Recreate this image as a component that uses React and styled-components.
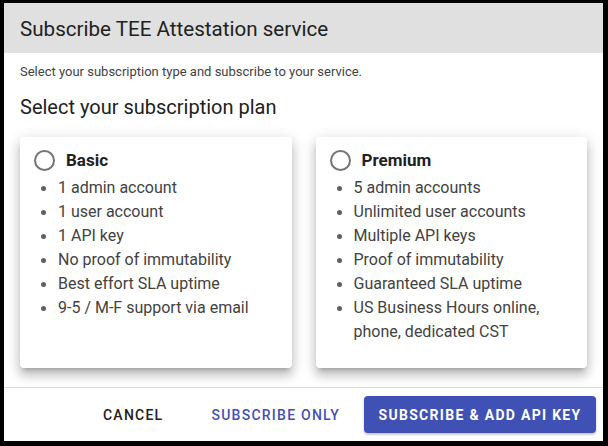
import React from 'react';
import styled, { createGlobalStyle } from 'styled-components';

const GlobalStyle = createGlobalStyle`
  html, body {
    margin: 0;
    padding: 0;
    background: #000;
  }
  body {
    font-family: Roboto, "Liberation Sans", sans-serif;
  }
`;

const Frame = styled.div`
  width: 608px;
  height: 446px;
  box-sizing: border-box;
  border-style: solid;
  border-color: #000;
  border-width: 3px 5px 5px 4px;
  background: #fff;
  display: flex;
  flex-direction: column;
`;

const Header = styled.div`
  height: 50px;
  background: #e0e0e0;
  display: flex;
  align-items: center;
  padding: 1px 16px 0;
  box-sizing: border-box;
  font-size: 20.6px;
  color: #212121;
`;

const Content = styled.div`
  flex: 1;
  padding: 10px 16px 0;
  display: flex;
  flex-direction: column;
`;

const Subtitle = styled.div`
  font-size: 13px;
  line-height: 18px;
  color: #424242;
`;

const PlanHeading = styled.div`
  margin-top: 12px;
  font-size: 20px;
  line-height: 28px;
  color: #212121;
`;

const Cards = styled.div`
  margin-top: 16px;
  display: grid;
  grid-template-columns: 1fr 1fr;
  gap: 24px;
`;

const Card = styled.div`
  background: #fff;
  border-radius: 4px;
  height: 231px;
  box-sizing: border-box;
  padding: 11px 14px 24px;
  box-shadow: 0 5px 5px -3px rgba(0, 0, 0, 0.2), 0 8px 10px 1px rgba(0, 0, 0, 0.14),
    0 3px 14px 2px rgba(0, 0, 0, 0.12);
`;

const CardTitle = styled.label`
  display: flex;
  align-items: center;
  gap: 11px;
  height: 24px;
  font-size: 17px;
  font-weight: 700;
  color: #212121;
`;

const Radio = styled.span`
  width: 17px;
  height: 17px;
  border-radius: 50%;
  border: 2px solid #757575;
  flex-shrink: 0;
`;

const Features = styled.ul`
  list-style: none;
  margin: 4px 0 0;
  padding: 0;
`;

const Feature = styled.li`
  position: relative;
  padding-left: 24px;
  font-size: 16px;
  line-height: 24px;
  color: #424242;

  &::before {
    content: '';
    position: absolute;
    left: 7px;
    top: 10px;
    width: 5px;
    height: 5px;
    border-radius: 50%;
    background: #616161;
  }
`;

const Footer = styled.div`
  border-top: 1px solid #dcdcdc;
  height: 54px;
  box-sizing: border-box;
  display: flex;
  align-items: center;
  justify-content: flex-end;
  padding: 0 7px 0 0;
`;

const TextButton = styled.button`
  background: none;
  border: none;
  padding: 0 16px;
  height: 37px;
  margin-right: ${p => p.$gap || 0}px;
  font-family: Roboto, "Liberation Sans", sans-serif;
  font-size: 14px;
  font-weight: 500;
  letter-spacing: 1.25px;
  color: ${p => p.$color || '#212121'};
`;

const PrimaryButton = styled.button`
  background: #3f51b5;
  border: none;
  border-radius: 4px;
  height: 37px;
  width: 232px;
  padding: 0;
  font-family: Roboto, "Liberation Sans", sans-serif;
  font-size: 14px;
  font-weight: 700;
  letter-spacing: 1.3px;
  color: #fff;
  box-shadow: 0 2px 2px rgba(0, 0, 0, 0.14), 0 1px 3px rgba(0, 0, 0, 0.12);
`;

const plans = [
  {
    name: 'Basic',
    features: [
      '1 admin account',
      '1 user account',
      '1 API key',
      'No proof of immutability',
      'Best effort SLA uptime',
      '9-5 / M-F support via email',
    ],
  },
  {
    name: 'Premium',
    features: [
      '5 admin accounts',
      'Unlimited user accounts',
      'Multiple API keys',
      'Proof of immutability',
      'Guaranteed SLA uptime',
      'US Business Hours online, phone, dedicated CST',
    ],
  },
];

export default function App() {
  return (
    <>
      <GlobalStyle />
      <Frame>
        <Header>Subscribe TEE Attestation service</Header>
        <Content>
          <Subtitle>Select your subscription type and subscribe to your service.</Subtitle>
          <PlanHeading>Select your subscription plan</PlanHeading>
          <Cards>
            {plans.map(plan => (
              <Card key={plan.name}>
                <CardTitle>
                  <Radio />
                  {plan.name}
                </CardTitle>
                <Features>
                  {plan.features.map(f => (
                    <Feature key={f}>{f}</Feature>
                  ))}
                </Features>
              </Card>
            ))}
          </Cards>
        </Content>
        <Footer>
          <TextButton $gap={16}>CANCEL</TextButton>
          <TextButton $color="#3f51b5" $gap={8}>SUBSCRIBE ONLY</TextButton>
          <PrimaryButton>SUBSCRIBE &amp; ADD API KEY</PrimaryButton>
        </Footer>
      </Frame>
    </>
  );
}
